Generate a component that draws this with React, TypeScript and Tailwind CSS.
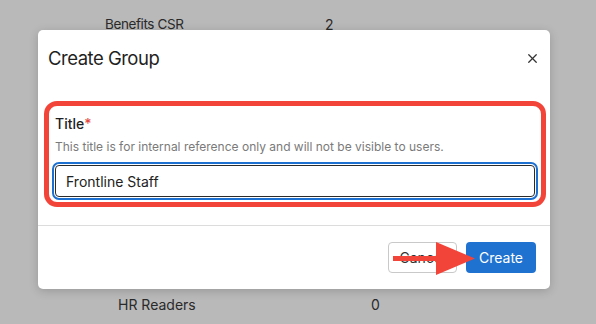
import { X } from 'lucide-react';

// Create Group dialog over a dimmed groups list, with a red annotation box and arrow.

export default function App() {
  return (
    <div
      className="relative h-[324px] w-[596px] overflow-hidden bg-[#b9b9b9] text-[#222]"
      style={{ fontFamily: 'Inter, "Noto Sans", sans-serif' }}
    >
      {/* list behind the overlay */}
      <div className="flex h-full flex-col justify-between pb-[9px] pt-[14px] text-[14px] text-[#2a2a2a]">
        <div className="flex">
          <span className="ml-[105px] w-[220px] text-[13.5px] tracking-[-0.4px]">Benefits CSR</span>
          <span>2</span>
        </div>
        <div className="flex">
          <span className="ml-[118px] w-[253px]">HR Readers</span>
          <span>0</span>
        </div>
      </div>

      <CreateGroupDialog />
    </div>
  );
}

function CreateGroupDialog() {
  return (
    <div className="absolute left-[38px] top-[30px] flex w-[512px] flex-col rounded-[5px] bg-white shadow-[0_2px_10px_rgba(0,0,0,0.18)]">
      <header className="flex items-center justify-between pl-[10px] pr-[10px] pt-[14px]">
        <h2 className="text-[18.5px] leading-[28px] tracking-[-0.5px] text-[#1f1f1f]">Create Group</h2>
        <X className="h-[15px] w-[15px] text-[#333]" strokeWidth={2} />
      </header>

      <div className="ml-[6px] mr-[4px] mt-[29px] rounded-[13px] border-[5px] border-[#f3443a] px-[6px] pb-[5px] pt-[8px]">
        <label className="block text-[14px] font-medium leading-[20px] text-[#1f1f1f]">
          Title<span className="text-[#e5483f]">*</span>
        </label>
        <p className="mt-[5px] text-[12px] leading-[16px] text-[#7a7a7a]">
          This title is for internal reference only and will not be visible to users.
        </p>
        <input
          readOnly
          value="Frontline Staff"
          className="mt-[10px] h-[32px] w-full rounded-[4px] border border-[#2b2b2b] px-[10px] text-[14px] text-[#222] outline outline-2 outline-offset-1 outline-[#1d70cf]"
        />
      </div>

      <footer className="relative mt-[18px] flex justify-end gap-[9px] border-t border-[#dcdcdc] pb-[16px] pr-[14px] pt-[16px]">
        <button
          type="button"
          className="h-[31px] w-[69px] rounded-[4px] border border-[#c9c9c9] bg-white text-[14px] text-[#333]"
        >
          Cancel
        </button>
        <button
          type="button"
          className="h-[31px] w-[70px] rounded-[4px] bg-[#1f72cf] text-[14px] text-white"
        >
          Create
        </button>
        <svg
          className="absolute left-[355px] top-[16px]"
          width="82"
          height="34"
          viewBox="0 0 82 34"
          aria-hidden
        >
          <rect x="0" y="14" width="46" height="5" fill="#f3443a" />
          <polygon points="43,0 82,16.5 43,33" fill="#f3443a" />
        </svg>
      </footer>
    </div>
  );
}
